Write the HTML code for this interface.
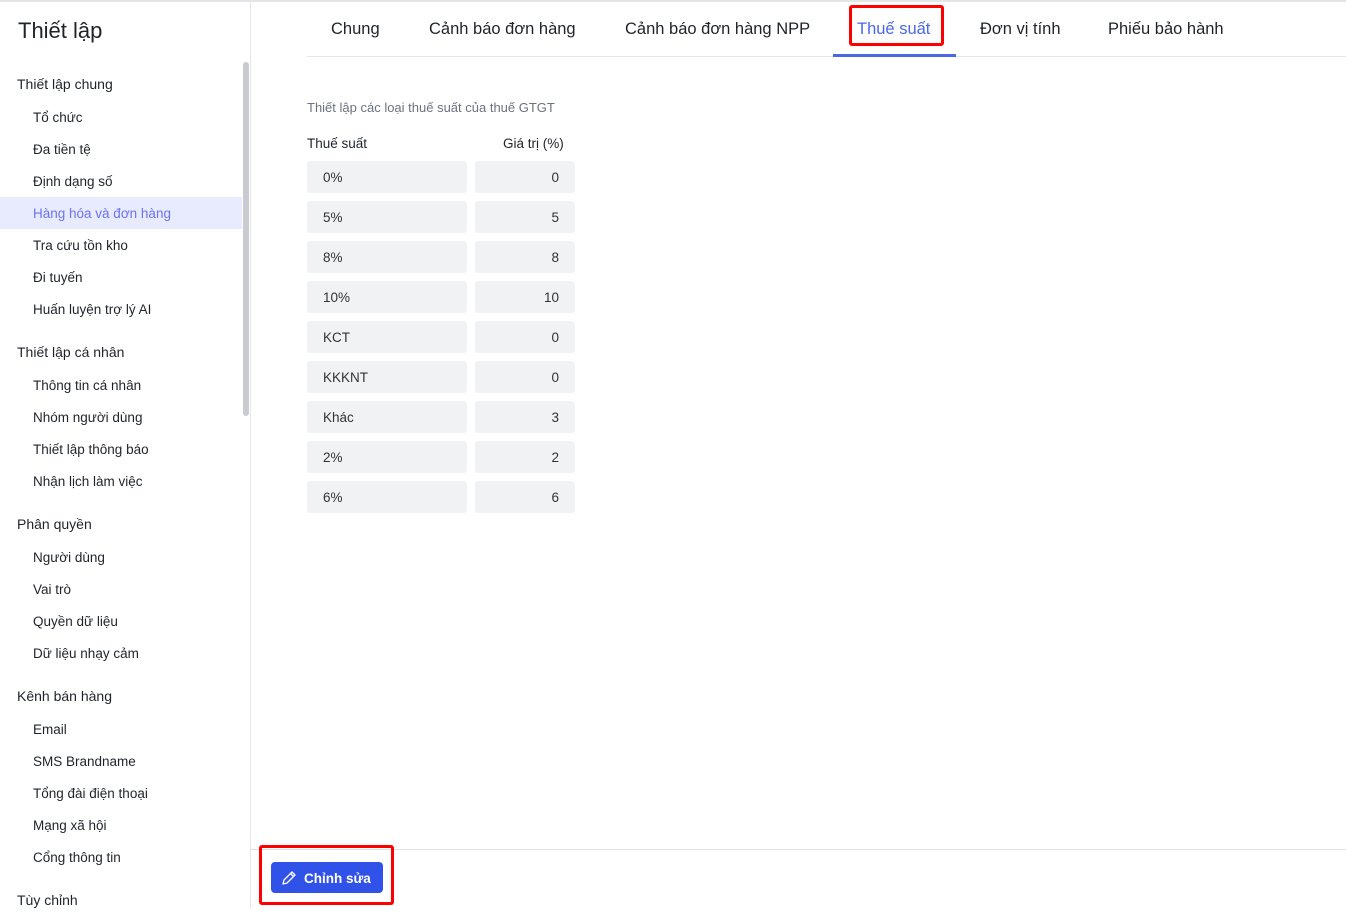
<!DOCTYPE html>
<html><head><meta charset="utf-8"><style>
*{box-sizing:border-box;margin:0;padding:0}
body{width:1346px;height:909px;overflow:hidden;background:#fff;font-family:"Liberation Sans",sans-serif;color:#1f2329;position:relative}
.topsh{position:absolute;left:0;top:0;width:1346px;height:2px;background:#e4e5e7}
.side{position:absolute;left:0;top:0;width:251px;height:909px;border-right:1px solid #e5e6eb}
.side h1{position:absolute;left:18px;top:18px;font-size:22px;font-weight:400;color:#1f2329}
.it{position:absolute;left:0;width:242px;height:32px;line-height:34px;font-size:13.5px;padding-left:33px;color:#1f2329}
.g{padding-left:17px;font-size:14px}
.act{background:#e8ebfd;color:#6b73f0}
.scroll{position:absolute;left:243px;top:62px;width:6px;height:354px;background:#c9cbd0;border-radius:3px}
.tab{position:absolute;top:20px;font-size:16.5px;color:#1f2329}
.tl{position:absolute;left:307px;top:56px;width:1039px;height:1px;background:#e5e6eb}
.ul{position:absolute;left:833px;top:54px;width:123px;height:3px;background:#4a67e8}
.red{position:absolute;border:3px solid #f00;border-radius:3px}
.desc{position:absolute;left:307px;top:100px;font-size:13px;color:#6b7280}
.hd{position:absolute;top:136px;font-size:13.5px;color:#1f2329}
.c{position:absolute;height:32px;line-height:34px;background:#f1f2f4;border-radius:3px;font-size:13.5px;color:#333}
.c1{left:307px;width:160px;padding-left:16px}
.c2{left:475px;width:100px;text-align:right;padding-right:16px}
.foot{position:absolute;left:250px;top:849px;width:1096px;height:1px;background:#e0e1e4}
.btn{position:absolute;left:271px;top:862px;width:112px;height:31px;background:#3152e8;border-radius:4px;color:#fff;font-size:13.5px;font-weight:bold;line-height:33px;padding-left:33px}
.btn svg{position:absolute;left:10px;top:8px}
</style></head><body>
<div class="topsh"></div>
<div class="side">
<h1>Thiết lập</h1>
<div class="it g" style="top:67px">Thiết lập chung</div>
<div class="it" style="top:101px">Tổ chức</div>
<div class="it" style="top:133px">Đa tiền tệ</div>
<div class="it" style="top:165px">Định dạng số</div>
<div class="it act" style="top:197px">Hàng hóa và đơn hàng</div>
<div class="it" style="top:229px">Tra cứu tồn kho</div>
<div class="it" style="top:261px">Đi tuyến</div>
<div class="it" style="top:293px">Huấn luyện trợ lý AI</div>
<div class="it g" style="top:335px">Thiết lập cá nhân</div>
<div class="it" style="top:369px">Thông tin cá nhân</div>
<div class="it" style="top:401px">Nhóm người dùng</div>
<div class="it" style="top:433px">Thiết lập thông báo</div>
<div class="it" style="top:465px">Nhận lịch làm việc</div>
<div class="it g" style="top:507px">Phân quyền</div>
<div class="it" style="top:541px">Người dùng</div>
<div class="it" style="top:573px">Vai trò</div>
<div class="it" style="top:605px">Quyền dữ liệu</div>
<div class="it" style="top:637px">Dữ liệu nhạy cảm</div>
<div class="it g" style="top:679px">Kênh bán hàng</div>
<div class="it" style="top:713px">Email</div>
<div class="it" style="top:745px">SMS Brandname</div>
<div class="it" style="top:777px">Tổng đài điện thoại</div>
<div class="it" style="top:809px">Mạng xã hội</div>
<div class="it" style="top:841px">Cổng thông tin</div>
<div class="it g" style="top:883px">Tùy chỉnh</div>
<div class="scroll"></div>
</div>
<div class="tab" style="left:331px">Chung</div>
<div class="tab" style="left:429px">Cảnh báo đơn hàng</div>
<div class="tab" style="left:625px">Cảnh báo đơn hàng NPP</div>
<div class="tab" style="left:857px;color:#4a67e8">Thuế suất</div>
<div class="tab" style="left:980px">Đơn vị tính</div>
<div class="tab" style="left:1108px">Phiếu bảo hành</div>
<div class="tl"></div><div class="ul"></div>
<div class="red" style="left:849px;top:5px;width:95px;height:41px"></div>
<div class="desc">Thiết lập các loại thuế suất của thuế GTGT</div>
<div class="hd" style="left:307px">Thuế suất</div>
<div class="hd" style="left:503px">Giá trị (%)</div>
<div class="c c1" style="top:161px">0%</div><div class="c c2" style="top:161px">0</div>
<div class="c c1" style="top:201px">5%</div><div class="c c2" style="top:201px">5</div>
<div class="c c1" style="top:241px">8%</div><div class="c c2" style="top:241px">8</div>
<div class="c c1" style="top:281px">10%</div><div class="c c2" style="top:281px">10</div>
<div class="c c1" style="top:321px">KCT</div><div class="c c2" style="top:321px">0</div>
<div class="c c1" style="top:361px">KKKNT</div><div class="c c2" style="top:361px">0</div>
<div class="c c1" style="top:401px">Khác</div><div class="c c2" style="top:401px">3</div>
<div class="c c1" style="top:441px">2%</div><div class="c c2" style="top:441px">2</div>
<div class="c c1" style="top:481px">6%</div><div class="c c2" style="top:481px">6</div>
<div class="foot"></div>
<div class="btn"><svg width="16" height="16" viewBox="0 0 16 16" fill="none" stroke="#fff" stroke-width="1.3" stroke-linejoin="round"><path d="M2 14l1-4 8-8 3 3-8 8z M9.5 3.5l3 3"/></svg>Chỉnh sửa</div>
<div class="red" style="left:259px;top:845px;width:135px;height:60px"></div>
</body></html>
